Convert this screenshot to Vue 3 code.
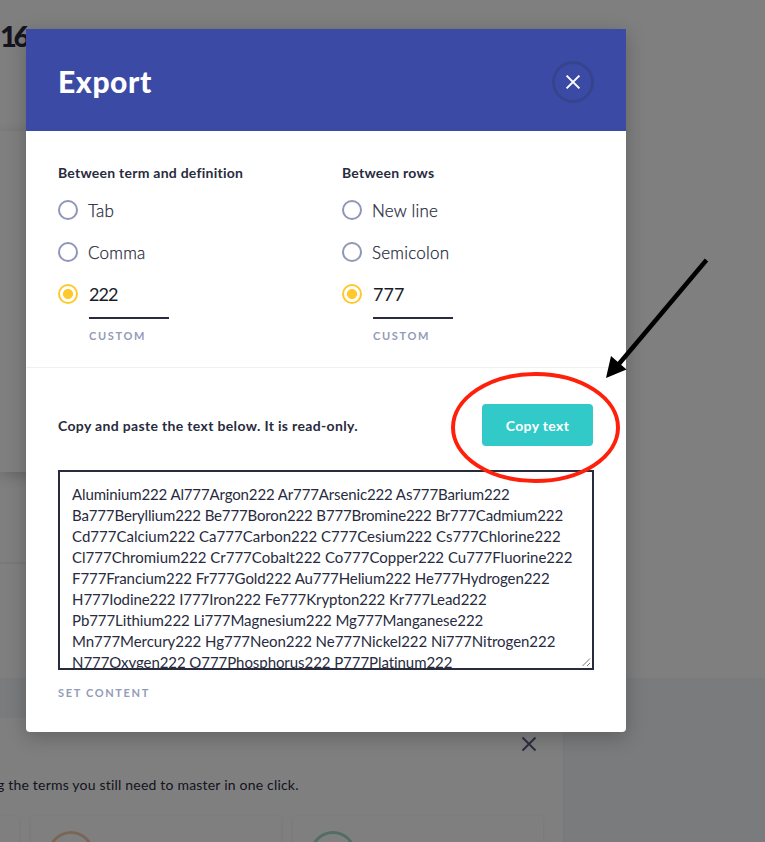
<script setup>
import { ref } from 'vue'

const groups = [
  { title: 'Between term and definition', name: 'term', options: ['Tab', 'Comma'], custom: '222' },
  { title: 'Between rows', name: 'rows', options: ['New line', 'Semicolon'], custom: '777' },
]

const lines = [
  { text: 'Aluminium222 Al777Argon222 Ar777Arsenic222 As777Barium222', tracking: -0.13 },
  { text: 'Ba777Beryllium222 Be777Boron222 B777Bromine222 Br777Cadmium222', tracking: -0.14 },
  { text: 'Cd777Calcium222 Ca777Carbon222 C777Cesium222 Cs777Chlorine222', tracking: 0.016 },
  { text: 'Cl777Chromium222 Cr777Cobalt222 Co777Copper222 Cu777Fluorine222', tracking: 0 },
  { text: 'F777Francium222 Fr777Gold222 Au777Helium222 He777Hydrogen222', tracking: -0.085 },
  { text: 'H777Iodine222 I777Iron222 Fe777Krypton222 Kr777Lead222', tracking: -0.075 },
  { text: 'Pb777Lithium222 Li777Magnesium222 Mg777Manganese222', tracking: -0.08 },
  { text: 'Mn777Mercury222 Hg777Neon222 Ne777Nickel222 Ni777Nitrogen222', tracking: -0.04 },
  { text: 'N777Oxygen222 O777Phosphorus222 P777Platinum222', tracking: -0.065 },
]
const open = ref(true)
</script>

<template>
  <div class="screen">
    <main class="page">
      <header class="page-head"><span class="page-title">16</span></header>
      <section class="study"><div class="flashcard"></div></section>
      <section class="author"></section>
      <section class="terms">
        <div class="promo">
          <div class="promo-head">
            <svg class="dismiss" viewBox="0 0 16 16"><path d="M1.5 1.5 14.5 14.5M14.5 1.5 1.5 14.5" /></svg>
          </div>
          <p class="promo-text">g the terms you still need to master in one click.</p>
          <div class="tiles">
            <div class="tile first"></div>
            <div class="tile"><span class="ring orange"></span></div>
            <div class="tile"><span class="ring green"></span></div>
          </div>
        </div>
      </section>
    </main>

    <div v-if="open" class="overlay">
      <div class="modal">
        <header class="modal-head">
          <h1>Export</h1>
          <button class="close" type="button" @click="open = false">
            <svg viewBox="0 0 16 16"><path d="M1.6 1.6 14.4 14.4M14.4 1.6 1.6 14.4" /></svg>
          </button>
        </header>

        <section class="options">
          <div v-for="g in groups" :key="g.name" class="group">
            <h2 :class="g.name">{{ g.title }}</h2>
            <div v-for="o in g.options" :key="o" class="option">
              <span class="radio"></span><span class="label">{{ o }}</span>
            </div>
            <div class="option custom">
              <span class="radio on"></span>
              <div class="field">
                <span class="value">{{ g.custom }}</span>
                <span class="caption">CUSTOM</span>
              </div>
            </div>
          </div>
        </section>

        <section class="output">
          <div class="output-head">
            <p>Copy and paste the text below. It is read-only.</p>
            <button class="copy" type="button">Copy text</button>
          </div>
          <div class="textbox">
            <div v-for="l in lines" :key="l.text" class="line">
              <span :style="{ letterSpacing: l.tracking + 'px' }">{{ l.text }}</span>
            </div>
            <svg class="grip" viewBox="0 0 9 9"><path d="M.5 8 8 .5M5 8 8 5" /></svg>
          </div>
          <span class="caption">SET CONTENT</span>
        </section>
      </div>
    </div>

    <svg class="annotation" viewBox="0 0 765 842">
      <ellipse cx="535.5" cy="427.5" rx="82.5" ry="53.5" />
      <path class="shaft" d="M706.5 260 618 365" />
      <path class="tip" d="M606 378 611 356 626.5 369.5Z" />
    </svg>
  </div>
</template>

<style>
body { margin: 0; }
</style>

<style scoped>
* { box-sizing: border-box; }
h1, h2, p { margin: 0; }
button { border: 0; padding: 0; font: inherit; letter-spacing: inherit; }
.screen {
  position: relative; width: 765px; height: 842px; overflow: hidden;
  font-family: Lato, "Liberation Sans", sans-serif; font-variant-ligatures: none; color: #282b3e; background: #fff;
}
.page { display: flex; flex-direction: column; height: 842px; }
.page-head { height: 131px; padding-top: 18px; }
.page-title { display: block; width: 40px; font-size: 29px; line-height: 36px; font-weight: 900; letter-spacing: -3.2px; }
.study { width: 563px; height: 433px; border-bottom: 2px solid #f2f2f4; }
.flashcard { width: 560px; height: 341px; box-shadow: 0 4px 14px rgba(0, 0, 0, .2); }
.author { height: 114px; }
.terms { flex: 1; padding-top: 40px; background: #f5f7fb; }
.promo { width: 563px; height: 124px; background: #fff; box-shadow: 0 2px 4px rgba(0, 0, 0, .04); overflow: hidden; }
.promo-head { display: flex; justify-content: flex-end; padding: 18px 26px 0 0; }
.dismiss { width: 16px; height: 16px; fill: none; stroke: #5b5f85; stroke-width: 2; }
.promo-text { height: 20px; margin-top: 23px; margin-left: -3px; font-size: 14px; line-height: 20px; letter-spacing: .2px; white-space: nowrap; }
.tiles { display: flex; gap: 12px; margin-top: 21px; }
.tile { width: 250px; height: 60px; padding: 15px 0 0 17px; border-radius: 4px; box-shadow: 0 1px 4px rgba(0, 0, 0, .08); }
.tile.first { width: 19px; }
.ring { display: block; width: 46px; height: 46px; border: 3px solid; border-radius: 50%; }
.orange { border-color: #f5cdb0; }
.green { border-color: #a5dcc8; }

.overlay { position: absolute; inset: 0; padding: 29px 0 0 26px; background: rgba(0, 0, 0, .5); }
.modal { width: 600px; height: 703px; background: #fff; border-radius: 0 0 4px 4px; box-shadow: 0 5px 20px rgba(0, 0, 0, .24); }
.modal-head {
  display: flex; align-items: center; justify-content: space-between;
  height: 102px; padding: 4px 32px 0; background: #3b4ba5; color: #fff;
}
h1 { margin-top: -3px; font-size: 30px; line-height: 40px; font-weight: 900; letter-spacing: .6px; }
.close {
  display: flex; align-items: center; justify-content: center; width: 42px; height: 42px;
  border: 3px solid #36438f; border-radius: 50%; background: none;
}
.close svg { width: 16px; height: 16px; fill: none; stroke: #fff; stroke-width: 2; }
.options { display: flex; height: 237px; padding: 32px 0 0 32px; border-bottom: 1px solid #f0f0f2; }
.group { flex: none; width: 284px; }
h2 { height: 20px; margin-bottom: 17px; font-size: 14px; line-height: 20px; font-weight: 700; letter-spacing: .25px; white-space: nowrap; }
.option { display: flex; align-items: center; gap: 10px; height: 20px; margin-bottom: 22px; }
.radio { flex: none; width: 20px; height: 20px; border: 2px solid #8f96b8; border-radius: 50%; }
.radio.on { border-color: #ffc92e; background: radial-gradient(circle, #ffc92e 4.7px, transparent 5.3px); }
.label { padding-top: 2px; font-size: 17px; line-height: 20px; font-weight: 300; letter-spacing: .22px; -webkit-text-stroke: .25px; }
.custom { align-items: flex-start; gap: 11px; }
.field { display: flex; flex-direction: column; width: 80px; }
.value { height: 35px; border-bottom: 2px solid #282b3e; font-size: 18px; line-height: 21px; color: #1a1d28; letter-spacing: -.9px; }
.rows + .option ~ .custom .value { letter-spacing: 0; }
.caption { margin-top: 10px; font-size: 11px; line-height: 14px; font-weight: 700; letter-spacing: 1.65px; color: #939bb8; }
.output { padding: 36px 33px 0 32px; }
.output-head { display: flex; align-items: center; justify-content: space-between; height: 42px; font-size: 14px; font-weight: 700; letter-spacing: .34px; }
.copy { width: 111px; height: 42px; border-radius: 4px; background: #32cac9; color: #fff; }
.textbox { position: relative; width: 536px; height: 200px; margin-top: 24px; padding: 12px 12px 0; border: 2px solid #282b3e; overflow: hidden; }
.line { height: 21px; font-size: 15px; line-height: 21px; white-space: nowrap; }
.grip { position: absolute; right: 1px; bottom: 1px; width: 9px; height: 9px; fill: none; stroke: #555; stroke-width: .8; }
.output > .caption { display: block; margin-top: 16px; }
.annotation { position: absolute; inset: 0; width: 765px; height: 842px; fill: none; }
ellipse { stroke: #ff200b; stroke-width: 4; }
.shaft { stroke: #000; stroke-width: 4.5; }
.tip { fill: #000; }
</style>
